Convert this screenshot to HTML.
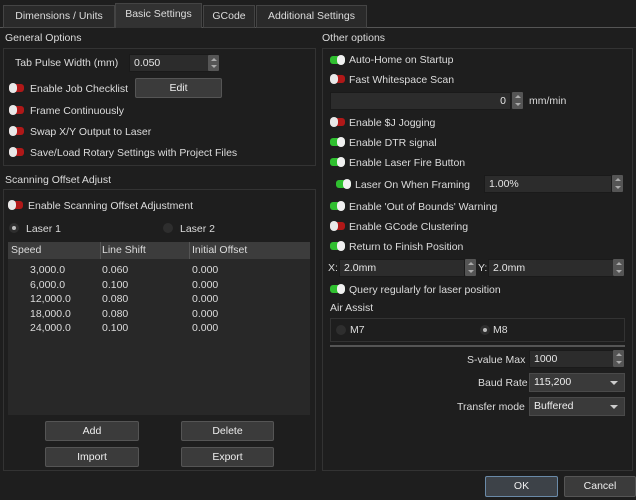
<!DOCTYPE html><html><head><style>
*{margin:0;padding:0;box-sizing:border-box}
body{width:636px;height:500px;background:#1e1e1e;font-family:"Liberation Sans",sans-serif;font-size:10.5px;color:#dcdcdc;position:relative;overflow:hidden}
.a{position:absolute;white-space:nowrap}
.tab{position:absolute;top:5px;height:23px;border:1px solid #444;background:#2a2a2a;color:#ddd;text-align:center;line-height:21px;font-size:10.5px}
.box{position:absolute;border:1px solid #333}
.inp{position:absolute;background:#2c2c2c;border:1px solid #1a1a1a;color:#e6e6e6;padding-left:4px;line-height:16px}
.sp{position:absolute;width:11px;background:#555;border-radius:1px}
.sp:before{content:"";position:absolute;left:3px;top:3px;border-left:3px solid transparent;border-right:3px solid transparent;border-bottom:3px solid #aaa}
.sp:after{content:"";position:absolute;left:3px;bottom:3px;border-left:3px solid transparent;border-right:3px solid transparent;border-top:3px solid #aaa}
.btn{position:absolute;background:#3b3b3b;border:1px solid #555;border-radius:2px;text-align:center;color:#eee}
.t{position:absolute;width:15px;height:8px;border-radius:3px}
.t.on{background:#2fbf2f}.t.on:after{content:"";position:absolute;left:7px;top:-1px;width:8px;height:10px;border-radius:4px;background:#f0f0f0}
.t.off{background:#b01818}.t.off:after{content:"";position:absolute;left:0;top:-1px;width:8px;height:10px;border-radius:4px;background:#e8e8e8}
.r{position:absolute;width:10px;height:10px;border-radius:5px;background:#2e2e2e}
.r.s:after{content:"";position:absolute;left:3px;top:3px;width:4px;height:4px;border-radius:2px;background:#bbb}
.cb{position:absolute;background:#3a3a3a;border:1px solid #4a4a4a;color:#eee;padding-left:4px;line-height:17px}
.cb:after{content:"";position:absolute;right:6px;top:7px;border-left:4px solid transparent;border-right:4px solid transparent;border-top:4px solid #ccc}
</style></head><body>
<div class="a" style="left:0;top:27px;width:636px;height:1px;background:#555"></div>
<div class="tab" style="left:3px;width:112px">Dimensions / Units</div>
<div class="tab" style="left:115px;top:3px;height:25px;width:87px;background:#323232;border-bottom:none">Basic Settings</div>
<div class="tab" style="left:203px;width:52px">GCode</div>
<div class="tab" style="left:256px;width:111px">Additional Settings</div>

<div class="a" style="left:5px;top:32px">General Options</div>
<div class="box" style="left:3px;top:48px;width:313px;height:118px"></div>
<div class="a" style="left:15px;top:57px">Tab Pulse Width (mm)</div>
<div class="inp" style="left:129px;top:54px;width:82px;height:18px">0.050</div><div class="sp" style="left:208px;top:55px;height:16px"></div>
<div class="t off" style="left:9px;top:84px"></div><div class="a" style="left:30px;top:83px">Enable Job Checklist</div>
<div class="btn" style="left:135px;top:78px;width:87px;height:20px;line-height:18px">Edit</div>
<div class="t off" style="left:9px;top:106px"></div><div class="a" style="left:30px;top:105px">Frame Continuously</div>
<div class="t off" style="left:9px;top:127px"></div><div class="a" style="left:30px;top:126px">Swap X/Y Output to Laser</div>
<div class="t off" style="left:9px;top:148px"></div><div class="a" style="left:30px;top:147px">Save/Load Rotary Settings with Project Files</div>

<div class="a" style="left:5px;top:174px">Scanning Offset Adjust</div>
<div class="box" style="left:3px;top:189px;width:313px;height:282px"></div>
<div class="t off" style="left:8px;top:201px"></div><div class="a" style="left:28px;top:200px">Enable Scanning Offset Adjustment</div>
<div class="r s" style="left:9px;top:223px"></div><div class="a" style="left:26px;top:223px">Laser 1</div>
<div class="r" style="left:163px;top:223px"></div><div class="a" style="left:180px;top:223px">Laser 2</div>
<div class="a" style="left:8px;top:242px;width:302px;height:173px;background:#282828"></div>
<div class="a" style="left:8px;top:242px;width:302px;height:17px;background:#3c3c3c;line-height:17px">
<span class="a" style="left:3px">Speed</span><span class="a" style="left:92px;top:0;width:1px;height:17px;background:#555"></span><span class="a" style="left:94px">Line Shift</span><span class="a" style="left:181px;top:0;width:1px;height:17px;background:#555"></span><span class="a" style="left:184px">Initial Offset</span></div>
<div class="a" style="left:30px;top:263px;line-height:14.5px">3,000.0<br>6,000.0<br>12,000.0<br>18,000.0<br>24,000.0</div>
<div class="a" style="left:102px;top:263px;line-height:14.5px">0.060<br>0.100<br>0.080<br>0.080<br>0.100</div>
<div class="a" style="left:192px;top:263px;line-height:14.5px">0.000<br>0.000<br>0.000<br>0.000<br>0.000</div>
<div class="btn" style="left:45px;top:421px;width:94px;height:20px;line-height:18px">Add</div>
<div class="btn" style="left:181px;top:421px;width:93px;height:20px;line-height:18px">Delete</div>
<div class="btn" style="left:45px;top:447px;width:94px;height:20px;line-height:18px">Import</div>
<div class="btn" style="left:181px;top:447px;width:93px;height:20px;line-height:18px">Export</div>

<div class="a" style="left:322px;top:32px">Other options</div>
<div class="box" style="left:322px;top:48px;width:311px;height:423px"></div>
<div class="t on" style="left:330px;top:56px"></div><div class="a" style="left:349px;top:54px">Auto-Home on Startup</div>
<div class="t off" style="left:330px;top:75px"></div><div class="a" style="left:349px;top:74px">Fast Whitespace Scan</div>
<div class="inp" style="left:330px;top:92px;width:181px;height:18px;text-align:right;padding-right:4px">0</div><div class="sp" style="left:512px;top:92px;height:17px"></div>
<div class="a" style="left:529px;top:95px">mm/min</div>
<div class="t off" style="left:330px;top:118px"></div><div class="a" style="left:349px;top:117px">Enable $J Jogging</div>
<div class="t on" style="left:330px;top:138px"></div><div class="a" style="left:349px;top:137px">Enable DTR signal</div>
<div class="t on" style="left:330px;top:158px"></div><div class="a" style="left:349px;top:157px">Enable Laser Fire Button</div>
<div class="t on" style="left:336px;top:180px"></div><div class="a" style="left:355px;top:179px">Laser On When Framing</div>
<div class="inp" style="left:484px;top:175px;width:128px;height:18px">1.00%</div><div class="sp" style="left:612px;top:175px;height:17px"></div>
<div class="t on" style="left:330px;top:202px"></div><div class="a" style="left:349px;top:201px">Enable 'Out of Bounds' Warning</div>
<div class="t off" style="left:330px;top:222px"></div><div class="a" style="left:349px;top:221px">Enable GCode Clustering</div>
<div class="t on" style="left:330px;top:242px"></div><div class="a" style="left:349px;top:241px">Return to Finish Position</div>
<div class="a" style="left:328px;top:262px">X:</div>
<div class="inp" style="left:339px;top:259px;width:126px;height:18px">2.0mm</div><div class="sp" style="left:465px;top:259px;height:17px"></div>
<div class="a" style="left:478px;top:262px">Y:</div>
<div class="inp" style="left:488px;top:259px;width:126px;height:18px">2.0mm</div><div class="sp" style="left:613px;top:259px;height:17px"></div>
<div class="t on" style="left:330px;top:285px"></div><div class="a" style="left:349px;top:284px">Query regularly for laser position</div>
<div class="a" style="left:330px;top:302px">Air Assist</div>
<div class="box" style="left:330px;top:318px;width:295px;height:24px"></div>
<div class="r" style="left:336px;top:325px"></div><div class="a" style="left:350px;top:324px">M7</div>
<div class="r s" style="left:480px;top:325px"></div><div class="a" style="left:493px;top:324px">M8</div>
<div class="a" style="left:330px;top:345px;width:295px;height:2px;background:#555"></div>
<div class="a" style="left:467px;top:354px">S-value Max</div>
<div class="inp" style="left:529px;top:350px;width:85px;height:18px">1000</div><div class="sp" style="left:613px;top:350px;height:17px"></div>
<div class="a" style="left:478px;top:377px">Baud Rate</div>
<div class="cb" style="left:529px;top:373px;width:96px;height:19px">115,200</div>
<div class="a" style="left:457px;top:401px">Transfer mode</div>
<div class="cb" style="left:529px;top:397px;width:96px;height:19px">Buffered</div>

<div class="btn" style="left:485px;top:476px;width:73px;height:21px;line-height:19px;border-color:#6a8aa8;background:#3d4248">OK</div>
<div class="btn" style="left:564px;top:476px;width:72px;height:21px;line-height:19px">Cancel</div>
</body></html>
